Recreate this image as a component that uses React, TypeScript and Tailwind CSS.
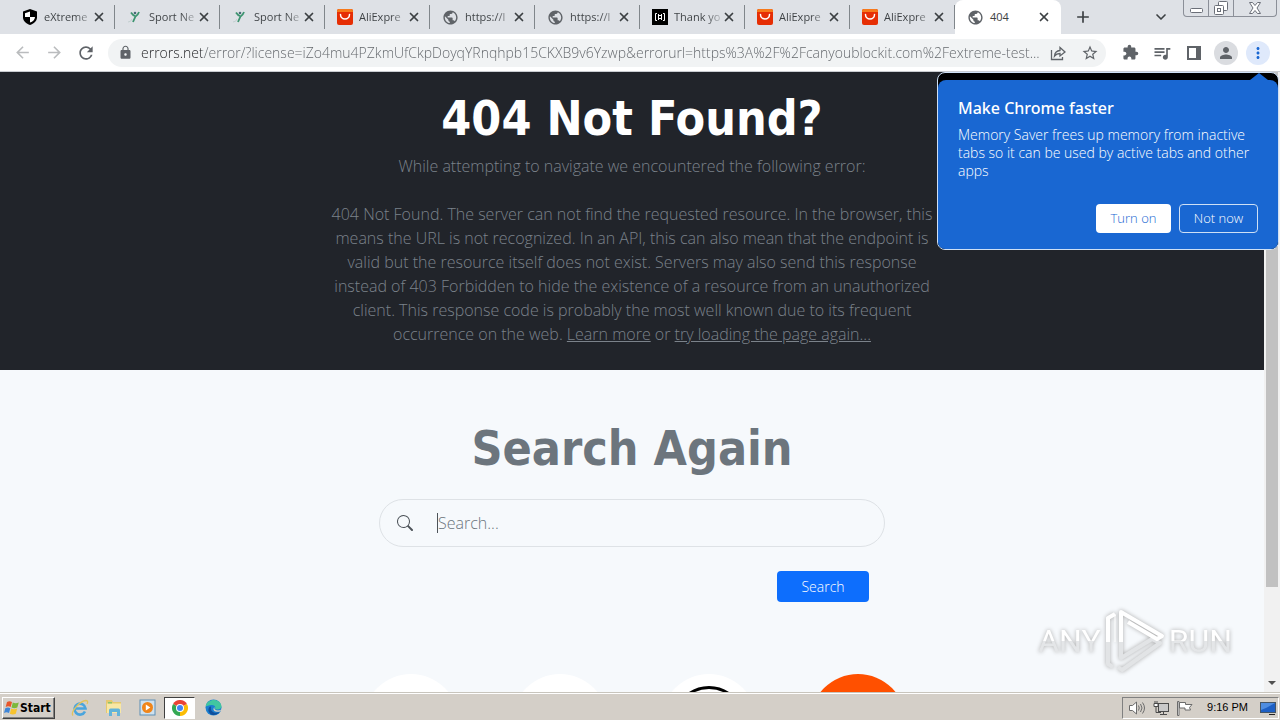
import type { ReactNode } from "react";
import {
  MdAdd,
  MdArrowBack,
  MdArrowForward,
  MdExtension,
  MdLock,
  MdMoreVert,
  MdPerson,
  MdPublic,
  MdQueueMusic,
  MdRefresh,
  MdStarBorder,
} from "react-icons/md";
import { BsSearch } from "react-icons/bs";
import { ChevronDown, X } from "lucide-react";

type IconName = "shield" | "sport" | "ali" | "globe" | "brackets";

const TABS: { title: string; icon: IconName }[] = [
  { title: "eXtreme", icon: "shield" },
  { title: "Sport Ne", icon: "sport" },
  { title: "Sport Ne", icon: "sport" },
  { title: "AliExpre", icon: "ali" },
  { title: "https://l", icon: "globe" },
  { title: "https://l", icon: "globe" },
  { title: "Thank yo", icon: "brackets" },
  { title: "AliExpre", icon: "ali" },
  { title: "AliExpre", icon: "ali" },
];

const URL_TEXT =
  "errors.net/error/?license=iZo4mu4PZkmUfCkpDoyqYRnqhpb15CKXB9v6Yzwp&errorurl=https%3A%2F%2Fcanyoublockit.com%2Fextreme-test...";

function Favicon({ name }: { name: IconName }) {
  if (name === "globe") return <MdPublic size={17} className="shrink-0 text-[#5f6368]" />;
  if (name === "ali")
    return (
      <svg width="16" height="16" viewBox="0 0 16 16" className="shrink-0">
        <rect width="16" height="16" rx="2" fill="#e62e04" />
        <path d="M0 3V2q0-2 2-2h12q2 0 2 2v1z" fill="#f7791b" />
        <path d="M3.5 5.5a4.5 4.5 0 0 0 9 0" fill="none" stroke="#fff" strokeWidth="1.5" strokeLinecap="round" />
      </svg>
    );
  if (name === "brackets")
    return (
      <svg width="16" height="16" viewBox="0 0 16 16" className="shrink-0">
        <rect width="16" height="16" fill="#000" />
        <path d="M5 4.500H3.500v7H5M11 4.500h1.500v7H11M6.500 5v6M9.500 5v6M6.500 6.500h3M6.500 9.500h3" fill="none" stroke="#fff" />
      </svg>
    );
  if (name === "sport")
    return (
      <svg width="16" height="16" viewBox="0 0 16 16" className="shrink-0">
        <path d="M4 3.500q2 3 4 3.500M12 3q-1 3-3.500 4.500L6 13" fill="none" stroke="#3d9470" strokeWidth="1.800" />
        <circle cx="8" cy="4" r="1.300" fill="#4b6a78" />
        <path d="M1 13q3 0 4-3" fill="none" stroke="#c3cfd0" />
      </svg>
    );
  return (
    <svg width="16" height="16" viewBox="0 0 16 16" className="shrink-0">
      <path d="M8 0l7 2.600v5.600c0 3.800-3.200 6.500-7 7.800-3.800-1.300-7-4-7-7.800V2.600z" fill="#000" />
      <path d="M8 2.500V8H3V4.200zM8 8h5c0 2.600-2.200 4.600-5 5.600z" fill="#fff" />
    </svg>
  );
}

function Tab({ title, icon }: { title: string; icon: IconName }) {
  return (
    <div className="flex h-6 min-w-0 flex-1 items-center border-r border-[#80868b] pl-3 pr-2">
      <Favicon name={icon} />
      <button className="ml-1.5 min-w-0 flex-1 whitespace-nowrap bg-linear-to-r from-[#3c4043] from-65% to-[#c5c8cd] bg-clip-text text-left text-[11px] text-transparent">
        {title}
      </button>
      <button aria-label="Close tab" className="text-[#3c4043]">
        <X size={14} strokeWidth={3} />
      </button>
    </div>
  );
}

function WindowControls() {
  return (
    <div className="flex h-[17px] w-[94px] shrink-0 divide-x divide-[#8b8f98] self-start rounded-b border border-t-0 border-[#8b8f98]">
      <button aria-label="Minimize" className="grid flex-1 place-items-center">
        <svg width="13" height="12" viewBox="0 0 13 12" fill="#fff" stroke="#6b6f78">
          <rect x="0.500" y="6.500" width="12" height="4" rx="1" />
        </svg>
      </button>
      <button aria-label="Restore" className="grid flex-1 place-items-center">
        <svg width="14" height="14" viewBox="0 0 14 14" fill="#fff" stroke="#6b6f78">
          <rect x="4.500" y="0.500" width="9" height="9" rx="1" />
          <rect x="0.500" y="4.500" width="9" height="9" rx="1" />
          <rect x="3.500" y="7.500" width="3" height="3" />
        </svg>
      </button>
      <button aria-label="Close" className="grid w-[42px] place-items-center">
        <svg width="12" height="12" viewBox="0 0 12 12" fill="#fff" stroke="#6b6f78">
          <path d="M.5.5h3L6 3.500 8.500.5h3L8 6l3.500 5.500h-3L6 8.500l-2.500 3h-3L4 6z" />
        </svg>
      </button>
    </div>
  );
}

function TabStrip() {
  return (
    <div className="flex h-[34px] items-center bg-[#dee1e6] pl-2.5">
      <div className="flex w-[945px] min-w-0 items-center">
        {TABS.map((tab, i) => (
          <Tab key={i} {...tab} />
        ))}
      </div>
      <div className="flex h-full w-[106px] items-center self-end rounded-t-lg bg-white pl-3 pr-2.5">
        <Favicon name="globe" />
        <button className="ml-1.5 flex-1 text-left text-[11px] text-[#3c4043]">404</button>
        <button aria-label="Close tab" className="text-[#3c4043]">
          <X size={14} strokeWidth={3} />
        </button>
      </div>
      <button aria-label="New tab" className="ml-3 text-[#3c4043]">
        <MdAdd size={20} />
      </button>
      <div className="flex-1" />
      <button aria-label="Search tabs" className="mr-3.5 text-[#3c4043]">
        <ChevronDown size={16} strokeWidth={2.5} />
      </button>
      <WindowControls />
      <div className="w-[3px]" />
    </div>
  );
}

function ToolButton({ label, children, className = "" }: { label: string; children: ReactNode; className?: string }) {
  return (
    <button aria-label={label} className={`grid size-6 shrink-0 place-items-center rounded-full text-[#5f6368] ${className}`}>
      {children}
    </button>
  );
}

function Toolbar() {
  return (
    <div className="flex h-[38px] items-center border-b border-[#c9ccd1] bg-white px-2.5">
      <div className="flex gap-2">
        <ToolButton label="Back" className="text-[#babcbe]">
          <MdArrowBack size={19} />
        </ToolButton>
        <ToolButton label="Forward" className="text-[#babcbe]">
          <MdArrowForward size={19} />
        </ToolButton>
        <ToolButton label="Reload">
          <MdRefresh size={20} />
        </ToolButton>
      </div>
      <div className="ml-2.5 flex h-7 min-w-0 flex-1 items-center rounded-full bg-[#f1f3f4] pl-2.5 pr-1">
        <MdLock size={15} className="mr-2 shrink-0 text-[#5f6368]" />
        <input
          aria-label="Address"
          readOnly
          value={URL_TEXT}
          className="min-w-0 flex-1 bg-linear-to-r from-[#202124] from-[61px] to-[#5f6368] to-[61px] bg-clip-text text-sm font-light text-transparent outline-none"
        />
        <ToolButton label="Share">
          <svg width="16" height="16" viewBox="0 0 16 16" fill="none" stroke="currentColor" strokeWidth="1.300">
            <path d="M1.500 5v9.500h11V12M4.500 11c.4-3.600 2.300-5.300 5.500-5.500V2.500l5 4.500-5 4V8.500c-2.400 0-4 .6-5.500 2.500z" />
          </svg>
        </ToolButton>
        <ToolButton label="Bookmark" className="ml-2">
          <MdStarBorder size={18} />
        </ToolButton>
      </div>
      <div className="ml-3 flex gap-2">
        <ToolButton label="Extensions">
          <MdExtension size={17} />
        </ToolButton>
        <ToolButton label="Media">
          <MdQueueMusic size={20} />
        </ToolButton>
        <ToolButton label="Side panel">
          <svg width="14" height="14" viewBox="0 0 14 14">
            <rect x="1" y="1" width="12" height="12" fill="none" stroke="currentColor" strokeWidth="2" />
            <path d="M9 1h4v12H9z" fill="currentColor" />
          </svg>
        </ToolButton>
        <ToolButton label="Profile" className="bg-[#dadce0] text-[#4a5a75]">
          <MdPerson size={18} />
        </ToolButton>
        <ToolButton label="Menu" className="bg-[#dfe9fb] text-[#1967d2]">
          <MdMoreVert size={18} />
        </ToolButton>
      </div>
    </div>
  );
}

function MemorySaverBubble() {
  return (
    <div className="absolute right-px top-0 w-[342px] overflow-hidden rounded-lg border border-[#cfe0f5] bg-black">
      <svg width="18" height="7" viewBox="0 0 18 7" className="ml-auto mr-2.5 block" fill="#1967d2">
        <path d="M0 7L9 0l9 7z" />
      </svg>
      <section className="rounded-t-lg bg-[#1967d2] px-5 py-4 text-white">
        <h2 className="font-['Noto_Sans',sans-serif] text-base leading-6 font-medium">Make Chrome faster</h2>
        <p className="mt-1.5 text-sm leading-[18px] font-light">
          Memory Saver frees up memory from inactive tabs so it can be used by active tabs and other apps
        </p>
        <div className="mt-6 flex justify-end gap-2 text-[13px] font-light">
          <button className="h-[29px] w-[75px] rounded bg-white text-[#1967d2]">Turn on</button>
          <button className="h-[29px] w-[79px] rounded border border-[#cfe0f5]">Not now</button>
        </div>
      </section>
    </div>
  );
}

function Scrollbar() {
  return (
    <div className="flex w-4 shrink-0 flex-col items-center bg-[#f1f1f1]">
      <div className="w-3 flex-[515] bg-[#c1c1c1]" />
      <div className="flex-[88]" />
      <svg width="16" height="17" viewBox="0 0 16 17" fill="#505050">
        <path d="M4 6h8l-4 4z" />
      </svg>
    </div>
  );
}

function ErrorSection() {
  return (
    <section className="bg-[#21242a] px-4 pb-6 pt-4 text-center">
      <h1 className="font-['DejaVu_Sans_Condensed','DejaVu_Sans',sans-serif] text-5xl leading-[60px] font-bold text-white">
        404 Not Found?
      </h1>
      <div className="mx-auto mt-1.5 max-w-[612px] text-base font-light text-[#7b828a]">
        <p>While attempting to navigate we encountered the following error:</p>
        <p className="mt-6">
          404 Not Found. The server can not find the requested resource. In the browser, this means the URL is not
          recognized. In an API, this can also mean that the endpoint is valid but the resource itself does not exist.
          Servers may also send this response instead of 403 Forbidden to hide the existence of a resource from an
          unauthorized client. This response code is probably the most well known due to its frequent occurrence on the
          web.{" "}
          <a href="#learn" className="underline">
            Learn more
          </a>{" "}
          or{" "}
          <a href="#reload" className="underline">
            try loading the page again...
          </a>
        </p>
      </div>
    </section>
  );
}

function SearchSection() {
  return (
    <section className="flex flex-col items-center px-4 pt-12">
      <h2 className="font-['DejaVu_Sans_Condensed','DejaVu_Sans',sans-serif] text-5xl leading-[60px] font-bold text-[#6c757d]">
        Search Again
      </h2>
      <form className="mt-[21px] w-full max-w-[506px]" onSubmit={(e) => e.preventDefault()}>
        <label className="flex h-12 items-center rounded-full border border-[#dee2e6] px-[17px] text-[#4d5359]">
          <BsSearch size={16} />
          <input
            aria-label="Search"
            placeholder="Search..."
            className="ml-6 min-w-0 flex-1 border-l border-[#4d5359] text-base leading-5 font-light outline-none placeholder:text-[#6c757d]"
          />
        </label>
        <div className="mt-6 flex justify-end pr-4">
          <button className="h-[31px] w-[92px] rounded bg-[#0d6efd] text-sm font-light text-white">Search</button>
        </div>
      </form>
      <div className="mt-[72px] flex gap-[53px] pl-1">
        <div className="size-24 rounded-full bg-white" />
        <div className="size-24 rounded-full bg-white" />
        <div className="size-24 rounded-full bg-white p-3">
          <div className="size-full rounded-full border-3 border-black" />
        </div>
        <div className="size-24 rounded-full bg-[#ff5000]" />
      </div>
    </section>
  );
}

function Watermark() {
  return (
    <div className="absolute bottom-[18px] right-12 flex items-center gap-1 font-['Roboto',sans-serif] text-[32px] leading-10 drop-shadow-[0_0_2px_#aaa]">
      <span className="bg-linear-to-b from-white from-50% to-[#e4e6e8] to-50% bg-clip-text text-transparent">ANY</span>
      <svg width="60" height="66" viewBox="0 0 60 66" fill="none" strokeWidth="4" strokeLinejoin="round">
        <path d="M3 33v23l5 3M16 33v17l31-19 8 4L17 62l-4-3" stroke="#e2e4e6" />
        <path d="M3 34V10l7-4M16 34V4l41 24-5 3-29-17" stroke="#fff" />
        <path d="M10 6v28" stroke="#fff" strokeWidth="1" />
      </svg>
      <span className="bg-linear-to-b from-white from-50% to-[#e4e6e8] to-50% bg-clip-text text-transparent">RUN</span>
    </div>
  );
}

function WindowsFlag() {
  return (
    <svg width="16" height="16" viewBox="0 0 16 16" className="shrink-0">
      <path d="M3 2q2.500-1.500 5 0L6.700 7q-2.500-1.500-5 0z" fill="#e8562a" />
      <path d="M8.800 2.400q2.700 1.500 6 0L13.300 7.500q-3 1.500-5.800 0z" fill="#7cb83a" />
      <path d="M1.300 8.200q2.700-1.500 5 0L5 13q-2.500-1.500-5 0z" fill="#3f86d8" />
      <path d="M7.200 8.600q2.700 1.500 6 0L11.800 13.700q-3 1.500-5.900 0z" fill="#f7c32e" />
    </svg>
  );
}

function ExplorerIcon() {
  return (
    <svg width="18" height="18" viewBox="0 0 18 18" fill="none">
      <path d="M14 12.500A5.500 5.500 0 1 1 14.500 9.500H5" stroke="#4aa5dd" strokeWidth="2.600" />
      <path d="M2 16.500C-1 13 9 2 15 1.500c2 0 2 2 1 3.500" stroke="#e2c35c" strokeWidth="1.300" />
    </svg>
  );
}

function FolderIcon() {
  return (
    <svg width="18" height="18" viewBox="0 0 18 18">
      <path d="M1 1h6l1 2h8v11H1z" fill="#e5c96f" />
      <path d="M2 4.500h14V14H2z" fill="#f8e7a4" />
      <path d="M3 3h4v1.500H3z" fill="#8dc46a" />
      <path d="M4 17v-6q0-1.500 1.500-1.500h8q1.500 0 1.500 1.500v6h-3v-4H7v4z" fill="#62b3d9" />
    </svg>
  );
}

function MediaIcon() {
  return (
    <svg width="17" height="17" viewBox="0 0 17 17">
      <rect x="1" y="1" width="15" height="15" fill="#cfe1ee" stroke="#5c8fb5" />
      <circle cx="8.500" cy="8.500" r="5.500" fill="#f08519" />
      <path d="M6.800 5.500v6l4.500-3z" fill="#fff" />
    </svg>
  );
}

function ChromeIcon() {
  return (
    <svg width="16" height="16" viewBox="0 0 16 16">
      <path d="M8 8L1.070 4A8 8 0 0 1 14.930 4z" fill="#ea4335" />
      <path d="M8 8L14.930 4A8 8 0 0 1 8 16z" fill="#fbbc04" />
      <path d="M8 8v8A8 8 0 0 1 1.070 4z" fill="#34a853" />
      <circle cx="8" cy="8" r="4" fill="#fff" />
      <circle cx="8" cy="8" r="3" fill="#4285f4" />
    </svg>
  );
}

function EdgeIcon() {
  return (
    <svg width="17" height="17" viewBox="0 0 17 17">
      <circle cx="8.500" cy="8.500" r="8" fill="#1b7fd0" />
      <path d="M.7 7C2-1 16-1.500 16.500 7.500c0 3-4.500 3.500-6.500 2.500 1-3-1-4.500-4-4C3 6.200 1 8 .7 7z" fill="#41c6a0" />
      <path d="M6 8c-1 5 4 7 8.500 5-5 6-12 2-11-3C4 8 5 7 6 8z" fill="#0f4f9c" />
      <path d="M9.500 8c-1 3 3 4.500 7 2.500l-1.500 2c-4 1-8-.5-6-4z" fill="#d4d0c8" />
    </svg>
  );
}

function Taskbar() {
  return (
    <footer className="flex h-7 shrink-0 items-center border-t border-[#c8c5bd] bg-[#d4cfc8] px-px pt-0.5 shadow-[inset_0_1px_0_#fff]">
      <button className="ml-px flex h-[22px] w-[53px] items-center border border-b-[#404040] border-l-white border-r-[#404040] border-t-white pl-px font-['DejaVu_Sans_Condensed','DejaVu_Sans',sans-serif] text-xs font-bold text-black shadow-[inset_-1px_-1px_0_#808080]">
        <WindowsFlag />
        Start
      </button>
      <div className="ml-4 flex items-center gap-4">
        <button aria-label="Internet Explorer">
          <ExplorerIcon />
        </button>
        <button aria-label="File Explorer">
          <FolderIcon />
        </button>
        <button aria-label="Media Player">
          <MediaIcon />
        </button>
      </div>
      <button
        aria-label="Chrome"
        className="ml-2 grid h-[22px] w-[31px] place-items-center border border-b-white border-l-[#404040] border-r-white border-t-[#404040] bg-white"
      >
        <ChromeIcon />
      </button>
      <button aria-label="Edge" className="ml-2.5">
        <EdgeIcon />
      </button>
      <div className="ml-auto flex h-[22px] w-[157px] items-center border border-b-white border-l-[#808080] border-r-white border-t-[#808080] pl-1.5 pr-0.5 text-[#6b6b6b]">
        <svg width="17" height="16" viewBox="0 0 17 16" fill="#fff" stroke="currentColor">
          <path d="M.5 5.500h3L7.500 2v12l-4-3.500h-3z" />
          <path d="M9.500 5.500q1.500 2.500 0 5M11.500 4q3 4 0 8M13.500 2.500q4 5.500 0 11" fill="none" />
        </svg>
        <svg width="16" height="16" viewBox="0 0 16 16" fill="#fff" stroke="#4b4b4b" className="ml-[7px]">
          <rect x="5.500" y="3.500" width="10" height="8" fill="#c9c9c9" />
          <path d="M1 3.500h4v3H1z" />
          <path d="M2 1v2.500M4 1v2.500M3 6.500v6h5M10.500 11.500v3M7 14.500h7" fill="none" />
        </svg>
        <svg width="16" height="16" viewBox="0 0 16 16" fill="#fff" stroke="currentColor" className="ml-2">
          <path d="M.5 1.500h1.500v14H.5zM2.500 2.500h6v2h6.500l-2.500 3 1 2.500H8v-2H2.500z" />
        </svg>
        <time className="ml-auto font-['Liberation_Sans',sans-serif] text-[11px] text-black">9:16 PM</time>
        <svg width="16" height="14" viewBox="0 0 16 14" className="ml-3">
          <rect x="0.500" y="1.500" width="15" height="10" fill="#1d5fc4" stroke="#445566" />
          <path d="M1 2h14L6 7 1 9z" fill="#4f8de0" />
          <path d="M9 13.500h6" stroke="#222" />
        </svg>
      </div>
    </footer>
  );
}

export default function App() {
  return (
    <div className="flex h-screen flex-col overflow-hidden font-['Open_Sans','Noto_Sans',sans-serif]">
      <header className="shrink-0">
        <TabStrip />
        <Toolbar />
      </header>
      <div className="relative flex min-h-0 flex-1">
        <main className="min-w-0 flex-1 overflow-hidden bg-[#f6f9fc]">
          <ErrorSection />
          <SearchSection />
        </main>
        <Scrollbar />
        <Watermark />
        <MemorySaverBubble />
      </div>
      <Taskbar />
    </div>
  );
}
